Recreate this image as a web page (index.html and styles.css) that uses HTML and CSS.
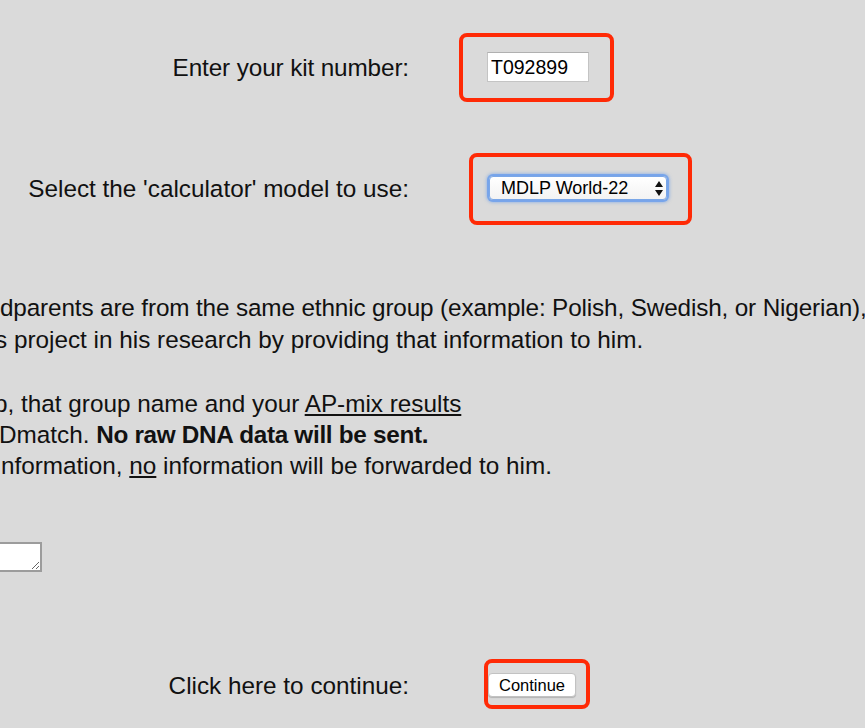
FILE: index.html
```html
<!DOCTYPE html>
<html lang="en">
<head>
<meta charset="utf-8">
<title>Calculator</title>
<link rel="stylesheet" href="styles.css">
</head>
<body>
<form class="page">
  <div class="row row-kit">
    <label class="label" for="kit">Enter your kit number:</label>
    <div class="mark mark-kit"><input id="kit" class="kit-input" type="text" value="T092899"></div>
  </div>

  <div class="row row-model">
    <label class="label" for="model">Select the 'calculator' model to use:</label>
    <div class="mark mark-model">
      <span class="select-wrap">
        <select id="model" class="model-select"><option>MDLP World-22</option></select>
        <svg class="arrows" width="8" height="15" viewBox="0 0 8 15"><path d="M4 0 L8 6 L0 6 Z M0 9 L8 9 L4 15 Z" fill="#111"/></svg>
      </span>
    </div>
  </div>

  <div class="para para-1">
    <div class="line"><span class="pre"><span>If all four of your gran</span></span><span class="vis v1">dparents are from the same ethnic group (example: Polish, Swedish, or Nigerian),</span></div>
    <div class="line"><span class="pre"><span>you can help thi</span></span><span class="vis v2">s project in his research by providing that information to him.</span></div>
  </div>

  <div class="para para-2">
    <div class="line"><span class="pre"><span>If you belong to such a grou</span></span><span class="vis v3">p, that group name and your <a class="link" href="#">AP-mix results</a></span></div>
    <div class="line"><span class="pre"><span>will be forwarded to GE</span></span><span class="vis v4">Dmatch. <b class="strong">No raw DNA data will be sent.</b></span></div>
    <div class="line"><span class="pre"><span>If you do not provide this i</span></span><span class="vis v5">nformation, <u>no</u> information will be forwarded to him.</span></div>
  </div>

  <div class="ta-row">
    <span class="ta-pre"><textarea class="group-ta" aria-label="Ethnic group"></textarea></span>
  </div>

  <div class="row row-go">
    <label class="label">Click here to continue:</label>
    <div class="mark mark-go"><button type="button" class="go-btn">Continue</button></div>
  </div>
</form>
</body>
</html>
```

FILE: styles.css
```css
html, body {
  margin: 0;
  padding: 0;
  background: #dadada;
  overflow: hidden;
}
body {
  width: 865px;
  height: 728px;
  font-family: "Liberation Sans", Arial, Helvetica, sans-serif;
  font-size: 24.3px;
  color: #111;
}
.page {
  display: flex;
  flex-direction: column;
  padding-top: 33px;
}
.row {
  display: flex;
  align-items: center;
}
.label {
  width: 409px;
  flex-shrink: 0;
  text-align: right;
  white-space: nowrap;
  line-height: 28px;
}
.row-kit .label { letter-spacing: -0.12px; }
.mark {
  border: 4px solid #ff2a06;
  border-radius: 8px;
  display: flex;
}
.mark-kit {
  margin-left: 50px;
  padding: 15px 21px 16px 24px;
}
.mark-model {
  margin-left: 60px;
  padding: 19px 21px 21px 16px;
}
.row-model { margin-top: 51px; }
.mark-go {
  margin-left: 75px;
  padding: 10px 10px 8px 0;
}
.row-go { margin-top: 87px; }
.row-go .label { padding-top: 3px; }

.kit-input {
  box-sizing: border-box;
  width: 102px;
  height: 30px;
  margin: 0;
  padding: 1px 2px 0 3px;
  border: 1px solid #c4c4c4;
  border-top-color: #b0b0b0;
  background: #fff;
  font-family: "Liberation Sans", Arial, sans-serif;
  font-size: 19.5px;
  color: #000;
  outline: none;
}

.select-wrap {
  position: relative;
  display: flex;
}
.model-select {
  -webkit-appearance: none;
  appearance: none;
  box-sizing: border-box;
  width: 178px;
  height: 24px;
  margin: 0;
  padding: 0 0 0 11px;
  border: 1px solid #7aa7e8;
  border-radius: 4px;
  background: linear-gradient(#ffffff, #f3f3f3);
  box-shadow: 0 0 0 2px rgba(110, 160, 235, 0.85), 0 0 3px 3px rgba(110, 160, 235, 0.5);
  font-family: "Liberation Sans", Arial, sans-serif;
  font-size: 18px;
  line-height: 22px;
  color: #000;
  outline: none;
}
.arrows {
  position: absolute;
  right: 4px;
  top: 5px;
  pointer-events: none;
}

.para {
  display: flex;
  flex-direction: column;
}
.para-1 { margin-top: 67px; }
.para-2 { margin-top: 33px; }
.line {
  display: flex;
  white-space: nowrap;
  line-height: 31px;
}
.para-1 .line:first-child { padding-top: 1px; line-height: 30px; }
.para-1 .line + .line { padding-top: 1px; }
.pre {
  display: flex;
  justify-content: flex-end;
  width: 0;
  flex-shrink: 0;
}
.pre > span { flex-shrink: 0; }
.vis { flex-shrink: 0; }
.v1 { margin-left: 0; letter-spacing: -0.14px; }
.v2 { margin-left: -5px; }
.v3 { margin-left: -6px; }
.v4 { margin-left: -1px; }
.v5 { margin-left: 1px; }
.strong { letter-spacing: -0.3px; }
.link {
  color: #111;
  text-decoration: underline;
}

.ta-row {
  display: flex;
  margin-top: 61px;
}
.ta-pre {
  display: flex;
  justify-content: flex-end;
  width: 42px;
  flex-shrink: 0;
}
.group-ta {
  flex-shrink: 0;
  box-sizing: border-box;
  width: 360px;
  height: 30px;
  margin: 0;
  border: 2px solid #9c9c9c;
  background: #fff;
  resize: both;
}

.go-btn {
  box-sizing: border-box;
  width: 88px;
  height: 24px;
  margin: 0;
  padding: 0;
  border: 1px solid #c2c2c2;
  border-radius: 4px;
  background: #fff;
  box-shadow: 0 1px 1px rgba(0, 0, 0, 0.18);
  font-family: "Liberation Sans", Arial, sans-serif;
  font-size: 16.5px;
  color: #000;
}
```
